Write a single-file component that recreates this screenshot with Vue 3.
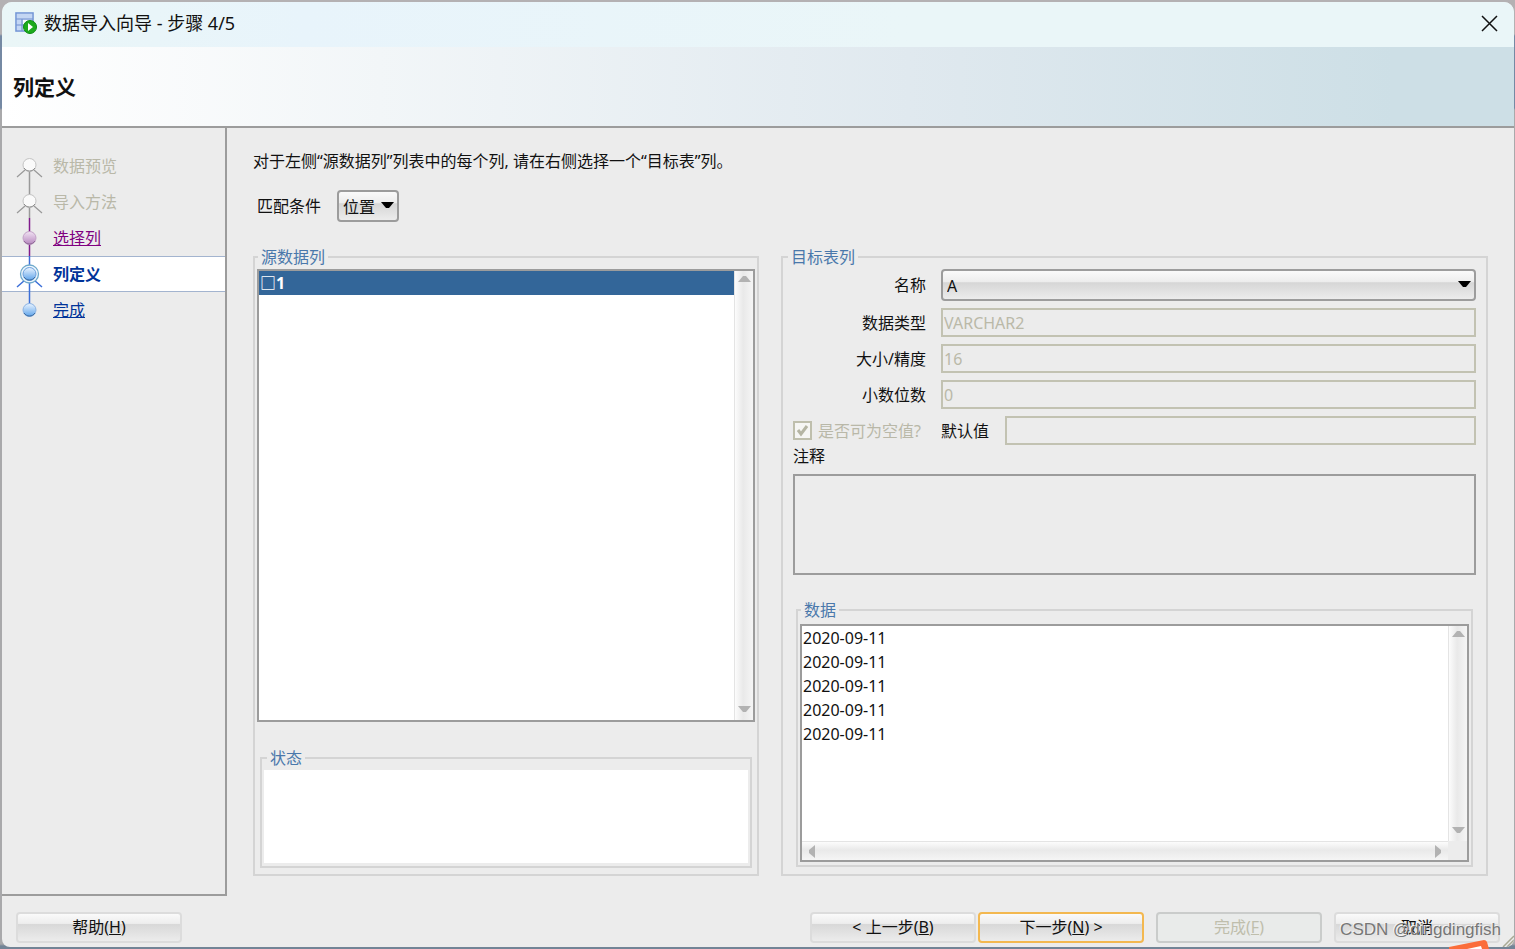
<script setup>
import { ref } from 'vue'

const steps = [
  { label: '数据预览', state: 'disabled' },
  { label: '导入方法', state: 'disabled' },
  { label: '选择列', state: 'visited' },
  { label: '列定义', state: 'current' },
  { label: '完成', state: 'next' },
]

const match = ref('位置')
const column = ref('A')
const fields = [
  { id: 'type', label: '数据类型', value: 'VARCHAR2' },
  { id: 'size', label: '大小/精度', value: '16' },
  { id: 'scale', label: '小数位数', value: '0' },
]
const rows = ['2020-09-11', '2020-09-11', '2020-09-11', '2020-09-11', '2020-09-11']
</script>

<template>
  <div class="desktop">
    <div class="dialog">
      <header class="titlebar">
        <svg class="app-icon" width="24" height="24" viewBox="0 0 24 24">
          <rect x="2" y="2" width="17" height="18" fill="#f7faff" stroke="#7497d6" stroke-width="1.6" />
          <rect x="3" y="3" width="15" height="4" fill="#c3d6f3" />
          <path d="M2 8h17M2 14h17M8 8v12" stroke="#7c9cd8" stroke-width="1.6" />
          <rect x="3" y="9" width="4" height="4" fill="#c4d7f5" />
          <rect x="3" y="15" width="4" height="4" fill="#c4d7f5" />
          <circle cx="16" cy="16" r="6.5" fill="#1cab1c" stroke="#0a8a12" />
          <path d="M14 12l5 4-5 4z" fill="#fff" />
        </svg>
        <span class="title">数据导入向导 - 步骤 4/5</span>
        <button class="close" type="button" aria-label="关闭">
          <svg width="17" height="17" viewBox="0 0 17 17">
            <path d="M1 1l15 15M16 1L1 16" stroke="#111" stroke-width="1.5" />
          </svg>
        </button>
      </header>

      <div class="banner"><h1>列定义</h1></div>

      <div class="body">
        <nav class="steps">
          <div v-for="(s, i) in steps" :key="s.label" class="step" :class="s.state">
            <svg class="node" width="51" height="36" viewBox="0 0 51 36">
              <defs>
                <linearGradient id="violet" x1="0" y1="0" x2="0" y2="1">
                  <stop offset="0" stop-color="#f1e3f3" />
                  <stop offset="1" stop-color="#b687bf" />
                </linearGradient>
                <linearGradient id="azure" x1="0" y1="0" x2="0" y2="1">
                  <stop offset="0" stop-color="#eaf4ff" />
                  <stop offset="1" stop-color="#5ea3ea" />
                </linearGradient>
              </defs>
              <g v-if="s.state === 'disabled'" fill="none" stroke="#999" stroke-width="1.5">
                <path v-if="i > 0" d="M27.5 0v12" />
                <path :d="i > 0 ? 'M27.5 24v10' : 'M27.5 24v12'" />
                <path d="M15 29l8-7M40 29l-8-7" stroke-width="1.2" />
                <path v-if="i > 0" d="M27.5 34v2" stroke="#801b8c" />
                <circle cx="27.5" cy="17" r="6.5" fill="#fafafa" stroke="#c4c4c4" stroke-width="1" />
                <path d="M22 20a6.5 6.5 0 0 0 11 0" stroke="#888" stroke-width="1" />
              </g>
              <g v-else-if="s.state === 'visited'" fill="none" stroke="#801b8c" stroke-width="1.5">
                <path d="M27.5 0v36" />
                <circle cx="27.5" cy="18" r="6.5" fill="url(#violet)" stroke="#c3a2c8" stroke-width="1" />
                <path d="M22 21a6.5 6.5 0 0 0 11 0" stroke="#8c6694" stroke-width="1" />
              </g>
              <g v-else-if="s.state === 'current'" fill="none" stroke="#3c6fd8" stroke-width="1.5">
                <path d="M27.5 0v10M27.5 26v10" />
                <path d="M15 31l8-7M40 31l-8-7" />
                <circle cx="27.5" cy="18" r="9" fill="#eef7fd" stroke="#6fa9cc" stroke-width="1.3" />
                <circle cx="27.5" cy="18" r="6.5" fill="url(#azure)" stroke="#6c9fdc" stroke-width="1" />
                <path d="M22 21a6.5 6.5 0 0 0 11 0" stroke="#3a699f" stroke-width="1" />
              </g>
              <g v-else fill="none" stroke="#3c6fd8" stroke-width="1.5">
                <path d="M27.5 0v14" />
                <circle cx="27.5" cy="18" r="6.5" fill="url(#azure)" stroke="#8db4e4" stroke-width="1" />
                <path d="M22 21a6.5 6.5 0 0 0 11 0" stroke="#3a699f" stroke-width="1" />
              </g>
            </svg>
            <a v-if="s.state === 'visited' || s.state === 'next'" href="#">{{ s.label }}</a>
            <span v-else>{{ s.label }}</span>
          </div>
        </nav>

        <main class="content">
          <p class="hint">对于左侧“源数据列”列表中的每个列, 请在右侧选择一个“目标表”列。</p>
          <div class="match">
            <label for="match">匹配条件</label>
            <div class="combo small">
              <select id="match" v-model="match"><option>位置</option></select>
              <svg class="caret" width="13" height="7" viewBox="0 0 13 7"><path d="M0 0h13L8 6H5z" /></svg>
            </div>
          </div>

          <div class="groups">
            <fieldset class="group source">
              <legend>源数据列</legend>
              <div class="list">
                <ul class="items" role="listbox" aria-label="源数据列">
                  <li class="selected" role="option" aria-selected="true">□1</li>
                </ul>
                <div class="vbar">
                  <svg width="13" height="7" viewBox="0 0 13 7"><path d="M0 7h13L8 1H5z" /></svg>
                  <svg width="13" height="7" viewBox="0 0 13 7"><path d="M0 0h13L8 6H5z" /></svg>
                </div>
              </div>
              <fieldset class="group status">
                <legend>状态</legend>
                <div class="status-box"></div>
              </fieldset>
            </fieldset>

            <fieldset class="group target">
              <legend>目标表列</legend>
              <div class="form">
                <label for="name">名称</label>
                <div class="combo">
                  <select id="name" v-model="column"><option>A</option></select>
                  <svg class="caret" width="13" height="7" viewBox="0 0 13 7"><path d="M0 0h13L8 6H5z" /></svg>
                </div>
                <template v-for="f in fields" :key="f.id">
                  <label :for="f.id">{{ f.label }}</label>
                  <input :id="f.id" type="text" :value="f.value" disabled />
                </template>
                <label class="nullable">
                  <span class="tick">
                    <input type="checkbox" checked disabled />
                    <svg width="13" height="13" viewBox="0 0 13 13"><path d="M2 6l3 4 6-8" /></svg>
                  </span>
                  <span>是否可为空值?</span>
                </label>
                <div class="default">
                  <label for="default">默认值</label>
                  <input id="default" type="text" disabled />
                </div>
              </div>
              <label class="note-label" for="note">注释</label>
              <textarea id="note" disabled></textarea>
              <fieldset class="group data">
                <legend>数据</legend>
                <div class="list">
                  <ul class="items">
                    <li v-for="(r, i) in rows" :key="i">{{ r }}</li>
                  </ul>
                  <div class="vbar">
                    <svg width="13" height="7" viewBox="0 0 13 7"><path d="M0 7h13L8 1H5z" /></svg>
                    <svg width="13" height="7" viewBox="0 0 13 7"><path d="M0 0h13L8 6H5z" /></svg>
                  </div>
                  <div class="hbar">
                    <svg width="7" height="13" viewBox="0 0 7 13"><path d="M7 0v13L1 8V5z" /></svg>
                    <svg width="7" height="13" viewBox="0 0 7 13"><path d="M0 0v13l6-5V5z" /></svg>
                  </div>
                  <div class="corner"></div>
                </div>
              </fieldset>
            </fieldset>
          </div>
        </main>
      </div>

      <footer class="actions">
        <button type="button">帮助(<u>H</u>)</button>
        <div class="nav-buttons">
          <div class="pair">
            <button type="button">&lt; 上一步(<u>B</u>)</button>
            <button type="button" class="primary">下一步(<u>N</u>) &gt;</button>
          </div>
          <button type="button" disabled>完成(<u>F</u>)</button>
          <button type="button">取消</button>
        </div>
        <svg class="grip" width="12" height="12" viewBox="0 0 12 12">
          <path d="M1 12L12 1M5 12l7-7M9 12l3-3" stroke="#a9a994" stroke-width="1.5" />
        </svg>
      </footer>
    </div>
    <svg class="badge" width="44" height="9" viewBox="0 0 44 9">
      <path d="M0 7L35 0q2 0 3 2l2 7H0z" fill="#fb6d3a" />
      <path d="M18 9l14-3 1 3z" fill="#fff" />
    </svg>
    <span class="watermark">CSDN @dingdingfish</span>
  </div>
</template>

<style>
body {
  margin: 0;
}
</style>

<style scoped>
* {
  box-sizing: border-box;
}
.desktop {
  position: relative;
  display: flex;
  min-height: 100vh;
  padding: 2px 1px 2px 2px;
  overflow: hidden;
  background: linear-gradient(#b4b1b3 0 34px, #7589a3 36px 108px, #a9a9ab 110px 944px, #738496 946px);
  font: 16px/22px "Noto Sans", "Noto Sans CJK SC", sans-serif;
  color: #111;
}
.dialog {
  flex: 1;
  display: flex;
  flex-direction: column;
  background: #ececec;
  border-radius: 10px 10px 8px 8px;
  overflow: hidden;
}
.titlebar {
  display: flex;
  align-items: center;
  height: 45px;
  padding: 0 16px 3px 12px;
  background: linear-gradient(90deg, #eaf6f7, #e8f4fb 20%, #eaf6f8 60%);
}
.title {
  flex: 1;
  margin-left: 6px;
  font-size: 18px;
}
.close {
  display: flex;
  padding: 0;
  border: 0;
  background: none;
}
.banner {
  display: flex;
  align-items: center;
  height: 81px;
  padding: 0 11px;
  background: linear-gradient(90deg, #fff, #f2f6f8 25%, #e0e9ef 60%, #cddfe6 92%);
  border-bottom: 2px solid #9c9c9c;
}
h1 {
  margin: 0;
  font-size: 21px;
  line-height: 30px;
}
.body {
  flex: 1;
  display: flex;
}
.steps {
  width: 225px;
  padding-top: 20px;
  border: solid #9c9c9c;
  border-width: 0 2px 2px 0;
}
.step {
  display: flex;
  align-items: center;
  height: 36px;
}
.node {
  flex: none;
}
.step.disabled {
  color: #b9b8a8;
}
.step.visited a {
  color: #800080;
}
.step.next a {
  color: #003399;
}
.step.current {
  background: #fff;
  box-shadow: inset 0 1px #a3b4cf, inset 0 -1px #a3b4cf;
  color: #003399;
  font-weight: bold;
}
.content {
  flex: 1;
  display: flex;
  flex-direction: column;
  padding: 22px 26px 20px;
}
.hint {
  margin: 0;
}
.match {
  display: flex;
  align-items: center;
  gap: 16px;
  margin: 18px 0 24px 4px;
}
.combo {
  position: relative;
  height: 32px;
}
.combo.small {
  width: 62px;
}
select {
  appearance: none;
  width: 100%;
  height: 100%;
  padding: 2px 4px 0;
  border: 2px solid #9c9c9c;
  border-radius: 4px;
  background: linear-gradient(#fafafa, #ededed 38%, #d6d6d6 42%, #ececec);
  font: inherit;
  color: inherit;
}
.caret {
  position: absolute;
  right: 5px;
  top: 12px;
}
.groups {
  flex: 1;
  display: grid;
  grid-template-columns: 506fr 707fr;
  gap: 22px;
}
.group {
  display: flex;
  flex-direction: column;
  min-width: 0;
  margin: 0;
  border: 2px solid #d4d4d4;
}
legend {
  padding: 0 3px;
  margin-left: 1px;
  color: #4a78ab;
}
.source {
  padding: 0 2px 6px;
}
.list {
  flex: 1;
  display: grid;
  grid-template: 1fr / 1fr 19px;
  margin-top: 1px;
  border: 2px solid #9c9c9c;
  background: #fff;
}
.items {
  margin: 0;
  padding: 0;
  list-style: none;
}
.items li {
  height: 24px;
  padding: 0 1px;
  line-height: 24px;
}
.items .selected {
  background: #336699;
  color: #fff;
  font-weight: bold;
}
.vbar,
.hbar {
  display: flex;
  justify-content: space-between;
  align-items: center;
  fill: #b2b2b2;
}
.vbar {
  flex-direction: column;
  padding: 4px 0 7px;
  border-left: 1px solid #e4e4e4;
  background: linear-gradient(90deg, #fcfcfc, #e9e9e9 45%, #f5f5f5);
}
.hbar {
  padding: 0 6px;
  border-top: 1px solid #e4e4e4;
  background: linear-gradient(#fcfcfc, #e9e9e9 45%, #f5f5f5);
}
.corner {
  background: #ececec;
}
.status {
  flex: none;
  margin: 25px 3px 0;
  padding: 1px 2px 3px;
}
.status legend {
  margin-left: 3px;
}
.status-box {
  flex: none;
  height: 93px;
  background: #fff;
}
.target {
  padding: 0 10px 7px;
}
.target > legend {
  margin-left: -5px;
}
.form {
  display: grid;
  grid-template-columns: 133px 1fr;
  gap: 7px 15px;
  align-items: center;
  margin-top: 1px;
  text-align: right;
}
input[type="text"],
textarea {
  width: 100%;
  height: 29px;
  padding: 0 1px;
  border: 2px solid #c2c2b2;
  border-radius: 0;
  background: transparent;
  font: inherit;
  color: #bab9a8;
}
.nullable {
  display: flex;
  align-items: center;
  gap: 6px;
  white-space: nowrap;
  color: #b9b8a8;
}
.tick {
  position: relative;
  display: flex;
}
.tick input {
  appearance: none;
  width: 19px;
  height: 19px;
  margin: 0;
  border: 2px solid #bfbfad;
  background: #f6f6f4;
}
.tick svg {
  position: absolute;
  left: 3px;
  top: 3px;
  fill: none;
  stroke: #b5b5a3;
  stroke-width: 3;
}
.default {
  display: flex;
  align-items: center;
  gap: 16px;
}
.default label {
  flex: none;
}
.note-label {
  margin-bottom: 7px;
}
textarea {
  display: block;
  height: 101px;
  border-color: #9c9c9c;
  resize: none;
}
.data {
  flex: 1;
  margin: 24px 3px 0;
  padding: 0 2px 3px;
}
.data .list {
  grid-template: 1fr 19px / 1fr 19px;
  margin-top: 3px;
}
.actions {
  position: relative;
  display: flex;
  justify-content: space-between;
  padding: 16px 14px 4px;
}
.nav-buttons {
  display: flex;
  gap: 12px;
}
.pair {
  display: flex;
  gap: 2px;
}
.actions button {
  width: 166px;
  height: 31px;
  padding: 0 0 2px;
  border: 2px solid #dcdcdc;
  border-radius: 4px;
  background: linear-gradient(#fafafa, #ededed 35%, #d8d8d8 39%, #ececec);
  font: inherit;
  line-height: 22px;
  color: inherit;
}
.actions .primary {
  border-color: #f3b850;
}
.actions button:disabled {
  border-color: #cacccb;
  background: #e9ebea;
  color: #bfbeac;
}
.grip {
  position: absolute;
  right: 0;
  bottom: 0;
}
.badge {
  position: absolute;
  right: 22px;
  bottom: 0;
}
.watermark {
  position: absolute;
  right: 14px;
  bottom: 8px;
  font: 17px/22px "Liberation Sans", sans-serif;
  color: #777;
  text-shadow: -1px -1px #f4f4f4;
}
</style>
